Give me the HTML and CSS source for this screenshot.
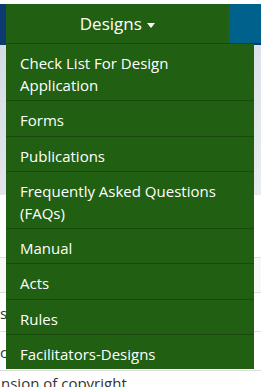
FILE: index.html
```html
<!DOCTYPE html>
<html>
<head>
    <title>Designs</title>
    <meta name="viewport" content="width=device-width, initial-scale=1.0">
    <link rel="stylesheet" href="styles.css">
</head>
<body>
    <div class="topbar">
        <div class="edge"></div>
        <div class="tab">Designs <span class="caret"></span></div>
        <div class="fill"></div>
    </div>
    <div class="rule"></div>

    <div class="banner"></div>

    <!-- table behind the menu -->
    <div class="rows">
        <div class="row gap"></div>
        <div class="row shade"></div>
        <div class="row">st</div>
        <div class="row">ce</div>
        <div class="tail">nsion of copyright</div>
    </div>

    <ul class="menu">
        <li>Check List For Design Application</li>
        <li>Forms</li>
        <li>Publications</li>
        <li>Frequently Asked Questions (FAQs)</li>
        <li>Manual</li>
        <li>Acts</li>
        <li>Rules</li>
        <li>Facilitators-Designs</li>
    </ul>
</body>
</html>
```

FILE: styles.css
```css
body {
    font-family: "Open Sans", Arial, sans-serif;
    margin: 0;
    padding: 0;
    background-color: #fff;
    position: relative;
    height: 387px;
    overflow: hidden;
}
.topbar {
    display: flex;
    height: 39px;
    margin-top: 4px;
}
.edge {
    width: 6px;
    background-color: #0b3b70;
}
.tab {
    width: 223px;
    background-color: #215f12;
    color: #fff;
    font-size: 17px;
    line-height: 39px;
    text-align: center;
}
.caret {
    display: inline-block;
    width: 0;
    height: 0;
    border-left: 4px solid transparent;
    border-right: 4px solid transparent;
    border-top: 5px solid #fff;
    vertical-align: middle;
    margin-left: 1px;
}
.fill {
    flex: 1;
    background-color: #00628c;
}
.rule {
    height: 2px;
    background-color: #0b3b70;
}
.banner {
    height: 150px;
    background: linear-gradient(115deg, #d6dbe3 0%, #eceef2 40%, #d9dde5 70%, #e9ecf0 100%);
}
.rows {
    color: #333;
    font-size: 15px;
}
.row {
    height: 38px;
    line-height: 40px;
    border-bottom: 1px solid #ddd;
    overflow: hidden;
    white-space: nowrap;
}
.row.gap {
    height: 62px;
    background-color: #fff;
}
.row.shade {
    height: 34px;
    background-color: #f7f7f7;
}
.tail {
    padding-top: 2px;
    padding-left: 1px;
    font-size: 15px;
    white-space: nowrap;
}
.menu {
    position: absolute;
    top: 43px;
    left: 6px;
    width: 248px;
    margin: 0;
    padding: 0;
    list-style: none;
    background-color: #215f12;
    border-top: 1px solid #184a0b;
}
.menu li {
    color: #fff;
    font-size: 15px;
    line-height: 22.2px;
    padding: 8px 20px 4px 14px;
    border-bottom: 1px solid #184a0b;
}
.menu li:last-child {
    border-bottom: none;
}
```
